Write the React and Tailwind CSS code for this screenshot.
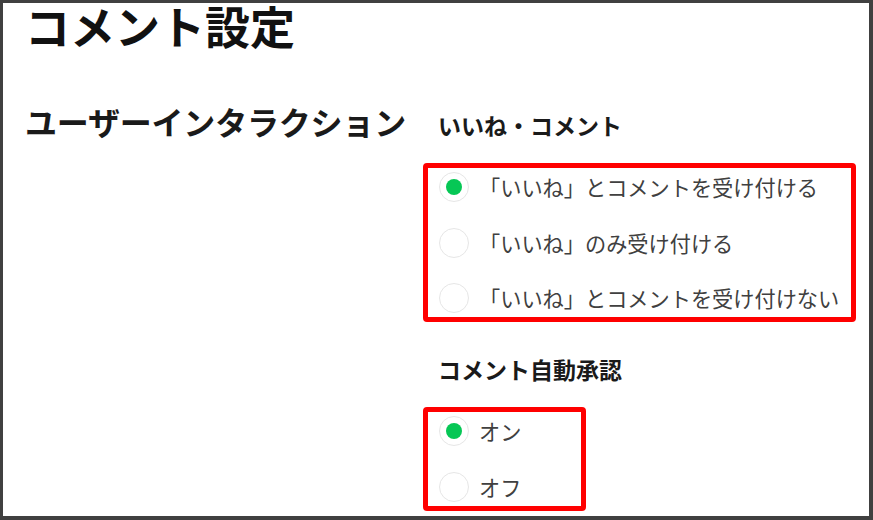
import React, { useState } from 'react';

const Radio = ({ checked, label, onSelect }) => (
  <label className="flex items-center h-[38px] cursor-pointer" onClick={onSelect}>
    <span className="flex items-center justify-center w-[30px] h-[30px] rounded-full border-[1.5px] border-[#e6e6e6] bg-white">
      {checked && <span className="w-[16px] h-[16px] rounded-full bg-[#06c755]"></span>}
    </span>
    <span className="ml-[10px] text-[21.2px] leading-none text-[#404040] whitespace-nowrap">{label}</span>
  </label>
);

const RadioGroup = ({ options, value, onChange }) => (
  <div className="border-[5px] border-[#ff0000] rounded-[4px] pl-[11px] pr-[12px] flex flex-col gap-[17.5px]">
    {options.map((o, i) => (
      <Radio key={o} label={o} checked={value === i} onSelect={() => onChange(i)} />
    ))}
  </div>
);

export default function App() {
  const [likes, setLikes] = useState(0);
  const [approve, setApprove] = useState(0);

  return (
    <div
      className="w-[873px] h-[520px] overflow-hidden bg-white border-[#404040] border-t-[3px] border-l-[3px] border-r-[4px] border-b-[4px]"
      style={{ fontFamily: '"Noto Sans CJK JP", "Noto Sans", sans-serif' }}
    >
      <div className="pl-[22px]">
        <h1 className="text-[45px] leading-[45px] font-bold text-[#111]">コメント設定</h1>
        <div className="flex mt-[57px]">
          <div className="w-[398px] shrink-0">
            <h2 className="text-[32px] leading-none font-bold text-[#1a1a1a] tracking-[-0.2px]">ユーザーインタラクション</h2>
          </div>
          <div className="flex flex-col">
            <h3 className="pl-[15px] text-[23px] leading-[32px] font-bold text-[#1a1a1a] mt-[4px]">いいね・コメント</h3>
            <div className="mt-[22px] flex">
              <RadioGroup
                options={['「いいね」とコメントを受け付ける', '「いいね」のみ受け付ける', '「いいね」とコメントを受け付けない']}
                value={likes}
                onChange={setLikes}
              />
            </div>
            <h3 className="pl-[15px] text-[23px] leading-[32px] font-bold text-[#1a1a1a] mt-[31px]">コメント自動承認</h3>
            <div className="mt-[22px] flex">
              <div className="w-[163px]">
                <RadioGroup options={['オン', 'オフ']} value={approve} onChange={setApprove} />
              </div>
            </div>
          </div>
        </div>
      </div>
    </div>
  );
}
